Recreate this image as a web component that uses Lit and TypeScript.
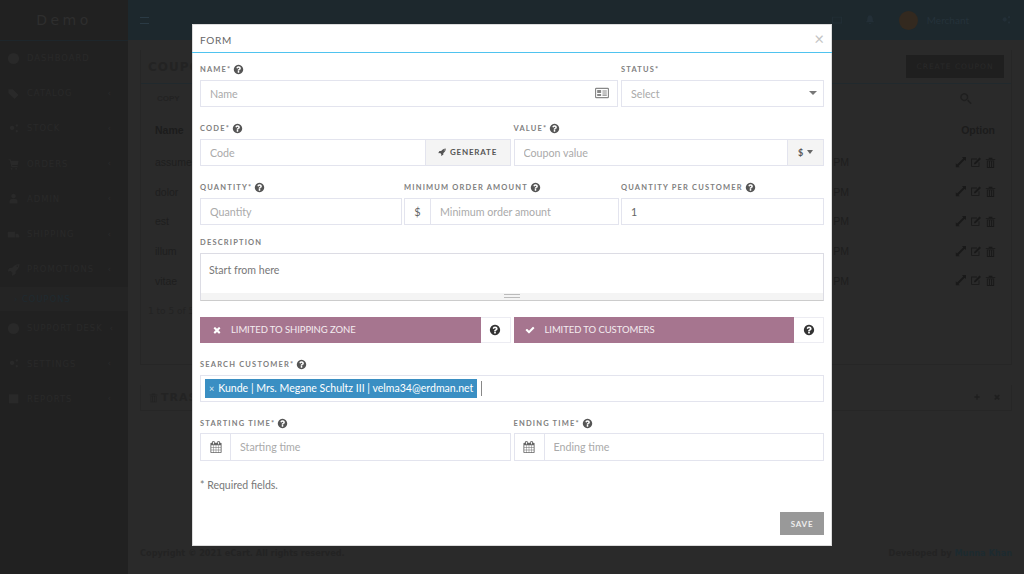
import { LitElement, html, css, svg } from "lit";
import { customElement } from "lit/decorators.js";

const P = {
  q: "M1024 1376v-192q0-14-9-23t-23-9h-192q-14 0-23 9t-9 23v192q0 14 9 23t23 9h192q14 0 23-9t9-23zm256-672q0-88-55.5-163t-138.5-116-170-41q-243 0-371 213-15 24 8 42l132 100q7 6 19 6 16 0 25-12 53-68 86-92 34-24 86-24 48 0 85.5 26t37.5 59q0 38-20 61t-68 45q-63 28-115.5 86.5t-52.5 125.5v36q0 14 9 23t23 9h192q14 0 23-9t9-23q0-19 21.5-49.5t54.5-49.5q32-18 49-28.5t46-35 44.5-48 28-60.5 12.5-81zm384 192q0 209-103 385.5t-279.5 279.5-385.5 103-385.5-103-279.5-279.5-103-385.5 103-385.5 279.5-279.5 385.5-103 385.5 103 279.5 279.5 103 385.5z",
  rocket: "M1504 448q0-40-28-68t-68-28-68 28-28 68 28 68 68 28 68-28 28-68zm224-288q0 249-75.5 430.5t-253.5 360.5q-81 80-195 176l-20 379q-2 16-16 26l-384 224q-7 4-16 4-12 0-23-9l-64-64q-13-14-8-32l85-276-281-281-276 85q-3 1-9 1-14 0-23-9l-64-64q-17-19-5-39l224-384q10-14 26-16l379-20q96-114 176-195 188-187 358-258t431-71q14 0 24 9.5t10 22.5z",
  cal: "M192 1664h288v-288h-288v288zm352 0h320v-288h-320v288zm-352-352h288v-320h-288v320zm352 0h320v-320h-320v320zm-352-384h288v-288h-288v288zm736 736h320v-288h-320v288zm-384-736h320v-288h-320v288zm768 736h288v-288h-288v288zm-384-352h320v-320h-320v320zm-352-864v-288q0-13-9.5-22.5t-22.5-9.5h-64q-13 0-22.5 9.5t-9.5 22.5v288q0 13 9.5 22.5t22.5 9.5h64q13 0 22.5-9.5t9.5-22.5zm736 864h288v-320h-288v320zm-384-384h320v-288h-320v288zm384 0h288v-288h-288v288zm32-480v-288q0-13-9.5-22.5t-22.5-9.5h-64q-13 0-22.5 9.5t-9.5 22.5v288q0 13 9.5 22.5t22.5 9.5h64q13 0 22.5-9.5t9.5-22.5zm384-64v1280q0 52-38 90t-90 38h-1408q-52 0-90-38t-38-90v-1280q0-52 38-90t90-38h128v-96q0-66 47-113t113-47h64q66 0 113 47t47 113v96h384v-96q0-66 47-113t113-47h64q66 0 113 47t47 113v96h128q52 0 90 38t38 90z",
  check: "M1671 566q0 40-28 68l-724 724-136 136q-28 28-68 28t-68-28l-136-136-362-362q-28-28-28-68t28-68l136-136q28-28 68-28t68 28l294 295 656-657q28-28 68-28t68 28l136 136q28 28 28 68z",
  times: "M1490 1322q0 40-28 68l-136 136q-28 28-68 28t-68-28l-294-294-294 294q-28 28-68 28t-68-28l-136-136q-28-28-28-68t28-68l294-294-294-294q-28-28-28-68t28-68l136-136q28-28 68-28t68 28l294 294 294-294q28-28 68-28t68 28l136 136q28 28 28 68t-28 68l-294 294 294 294q28 28 28 68z",
  circle: "M1664 896a768 768 0 1 1-1536 0 768 768 0 1 1 1536 0z",
  tag: "M200 300h600l800 800-560 560-840-800z",
  cart: "M200 300h300l60 200h1050l-130 600h-780l40 150h720v150h-840l-250-950h-170zM640 1500a120 120 0 1 0 1 0zM1260 1500a120 120 0 1 0 1 0z",
  user: "M896 250a320 320 0 1 0 1 0zM350 1600v-350q0-250 250-300h600q250 50 250 300v350z",
  truck: "M100 500h1000v800h-1000zM1180 800h300l220 250v250h-520z",
  gear: "M700 500a320 320 0 1 0 1 0zM1350 300a170 170 0 1 0 1 0zM1350 1100a170 170 0 1 0 1 0z",
  book: "M250 300h1300v1250h-1300z",
  mail: "M150 400h1500v1000h-1500zM280 530v740h1240v-740z",
  bell: "M896 200q300 0 380 350l60 450 180 250h-1240l180-250 60-450q80-350 380-350zM750 1350h290q0 190-145 190t-145-190z",
  expand: "M1650 150v550l-180-180-850 850 180 180H250v-550l180 180 850-850-180-180z",
  edit: "M300 350h800v120h-680v900h900v-500h120v620h-1140zM1450 200l200 200-750 750h-200v-200z",
  trash: "M650 250h500v150h400v120h-1300v-120h400zM400 620h1000v1030h-1000zM520 740v790h160v-790zM820 740v790h160v-790zM1120 740v790h160v-790z",
  search: "M750 250a480 480 0 1 0 1 0zM750 420a310 310 0 1 1-1 0zM1080 1150l130-130 430 430-130 130z",
  plus: "M750 300h300v450h450v300h-450v450h-300v-450h-450v-300h450z",
};
const ic = (d: string, cls = "ic") => html`<svg class=${cls} viewBox="0 0 1792 1792" aria-hidden="true">${svg`<path fill-rule="evenodd" d=${d}></path>`}</svg>`;

const nav = [
  ["DASHBOARD", P.circle, false], ["CATALOG", P.tag, true], ["STOCK", P.gear, true], ["ORDERS", P.cart, true],
  ["ADMIN", P.user, true], ["SHIPPING", P.truck, true], ["PROMOTIONS", P.rocket, true],
];
const nav2 = [["SUPPORT DESK", P.circle], ["SETTINGS", P.gear], ["REPORTS", P.book]];
const rows = [["assumenda", "PM"], ["dolor", "PM"], ["est", "PM"], ["illum", "PM"], ["vitae", "PM"]];

@customElement("app-root")
export class AppRoot extends LitElement {
  static styles = css`
    :host { display: block; width: 1024px; height: 574px; position: relative; overflow: hidden; background: #2a2a2a; font-family: Lato, sans-serif; }
    * { box-sizing: border-box; }
    .ic { width: 1em; height: 1em; fill: currentColor; display: block; flex: none; }
    .page { display: flex; height: 574px; }
    .side { width: 128px; flex: none; background: #212121; color: #292929; font-family: "DejaVu Sans", sans-serif; }
    .logo { height: 40.5px; display: flex; align-items: center; justify-content: center; font-size: 14px; letter-spacing: 3.5px; color: #2e2e2e; border-bottom: 1px solid #1e262b; }
    .nav { display: flex; align-items: center; height: 35.2px; padding: 0 16px 0 7px; font-size: 8.4px; letter-spacing: 1px; gap: 7px; }
    .nav .ic { font-size: 13px; }
    .nav .t { flex: 1; white-space: nowrap; }
    .nav .ch { font-size: 8px; color: #2c2c2c; }
    .active { height: 24px; background: #242424; padding-left: 14px; font-size: 8.4px; letter-spacing: 1px; display: flex; align-items: center; color: #1f2a30; white-space: nowrap; }
    .main { flex: 1; min-width: 0; display: flex; flex-direction: column; }
    .top { height: 40px; background: #1d282d; color: #25323a; display: flex; align-items: center; padding: 0 12px; font-size: 10px; }
    .burger { width: 9px; height: 7px; border-top: 1px solid #2a3a44; border-bottom: 1px solid #2a3a44; }
    .topr { margin-left: auto; display: flex; align-items: center; gap: 9px; }
    .topr .ic { font-size: 12px; color: #232f37; }
    .topr .mail { margin-right: 12px; }
    .topr .bell { margin-right: 14px; }
    .topr .share { margin-left: 22px; }
    .avatar { width: 19px; height: 19px; border-radius: 50%; background: #33291f; }
    .content { flex: 1; padding: 10px 12px 0; color: #1f1f1f; }
    .card { border-left: 1px solid #262626; border-right: 1px solid #262626; border-bottom: 1px solid #262626; }
    .chead { display: flex; align-items: center; justify-content: space-between; height: 34px; padding: 0 7px; border-bottom: 1px solid #21292d; font: bold 12px "DejaVu Sans", sans-serif; letter-spacing: 1px; color: #232323; }
    .create { width: 98px; height: 23px; background: #1f1f1f; color: #292929; font: 7.5px "DejaVu Sans", sans-serif; letter-spacing: 1px; display: flex; align-items: center; justify-content: center; white-space: nowrap; }
    .tools { display: flex; justify-content: space-between; align-items: center; height: 29px; padding: 0 38px 0 16px; font: bold 8px "Liberation Sans", sans-serif; color: #222; }
    .tools .ic { font-size: 15px; color: #1f1f1f; }
    .row { display: flex; height: 29.6px; padding: 0 14px 0 14px; align-items: center; font: 10.5px "Liberation Sans", sans-serif; color: #1e1e1e; }
    .row .nm { flex: 1; }
    .row .tm { margin-right: 105px; }
    .row.h { font-weight: bold; color: #1c1c1c; height: 34.5px; justify-content: space-between; padding-right: 16px; }
    .acts { display: flex; gap: 2px; font-size: 13px; color: #191919; }
    .info { padding: 11px 7px 0; height: 68.5px; font: 9px "DejaVu Sans", sans-serif; color: #232323; }
    .trash { margin-top: 20px; height: 26px; padding: 0 10px 0 7px; display: flex; align-items: center; font: bold 11px "DejaVu Sans", sans-serif; color: #232323; gap: 2px; letter-spacing: 1px; }
    .trash .end { margin-left: auto; display: flex; gap: 12px; }
    .trash .end .ic { font-size: 8px; color: #1f1f1f; }
    .foot { margin-top: auto; height: 34px; padding: 8px 12px 0; display: flex; justify-content: space-between; font: bold 8.2px "DejaVu Sans", sans-serif; color: #232323; white-space: nowrap; }
    .foot b { color: #1d2a30; }
    .modal { position: absolute; left: 192px; top: 24px; width: 640px; height: 522px; background: #fff; display: flex; flex-direction: column; box-shadow: inset 0 0 0 1px #dcdcdc; color: #666; }
    .mh { height: 29px; flex: none; display: flex; align-items: center; justify-content: space-between; padding: 3px 8px 0; border-bottom: 1px solid #4fc3ef; font-size: 10px; letter-spacing: .7px; color: #666; }
    .x { font-size: 17px; color: #c4c4c4; line-height: 1; letter-spacing: 0; margin-top: -3px; }
    .form { flex: 1; display: flex; flex-direction: column; gap: 14px; padding: 9.5px 8px 11px; }
    .g { display: grid; gap: 3px; }
    .g2 { grid-template-columns: 418px 203px; }
    .ge { grid-template-columns: 310.5px 310.5px; }
    .g3 { grid-template-columns: 202px 215px 203px; gap: 2px; }
    .s1 { margin-top: .5px; }
    .tight { margin-top: -3.5px; }
    .wide { margin-top: 2px; }
    .s2 { margin-top: 1px; }
    .lab { height: 12px; margin: 1px 0 4px; display: flex; align-items: center; gap: 2px; font-size: 7.5px; font-weight: 700; letter-spacing: 1.18px; color: #808080; white-space: nowrap; }
    .lab .ic { font-size: 11px; color: #555; }
    .box { height: 27.5px; display: flex; background: #fff; border: 1px solid #e3e4ee; }
    .box input { flex: 1; min-width: 0; border: 0; outline: 0; padding: 0 9px; font: 10.7px Lato, sans-serif; color: #666; background: none; }
    .box input::placeholder { color: #aaa; opacity: 1; }
    .box .tail { flex: none; align-self: center; margin-right: 8px; font-size: 14px; color: #888; }
    .caret { width: 0; height: 0; border: 3px solid transparent; border-top: 4px solid #666; border-bottom: 0; flex: none; }
    .status-c { align-self: center; margin-right: 6px; border-width: 4px 4px 0; border-top-color: #777; }
    .add { flex: none; display: flex; align-items: center; justify-content: center; background: #f4f4f4; border-left: 1px solid #e3e4ee; font-size: 8px; font-weight: 700; letter-spacing: .8px; color: #555; gap: 4px; }
    .gen { width: 85px; }
    .cur { width: 36px; font-size: 9px; gap: 3px; }
    .pre { flex: none; display: flex; align-items: center; justify-content: center; border-right: 1px solid #e3e4ee; color: #666; font-size: 11px; width: 26px; }
    .cal { width: 30px; font-size: 12px; color: #666; }
    .ta { height: 48px; border: 1px solid #dcdce4; border-bottom-color: #ccc; display: flex; flex-direction: column; }
    .ta .body { flex: 1; padding: 10px 8px; font-size: 10.6px; color: #777; }
    .grip { height: 7px; background: #f4f4f4; display: flex; justify-content: center; align-items: center; }
    .grip i { width: 16px; height: 4px; border-top: 1px solid #bbb; border-bottom: 1px solid #bbb; display: block; }
    .tog { height: 26px; display: flex; border: 1px solid #ececf2; }
    .tog .on { flex: 1; background: #a6758f; color: #f4ecf0; display: flex; align-items: center; font-size: 9.5px; letter-spacing: -.08px; margin: -1px 0 -1px -1px; padding-left: 11.5px; gap: 9.5px; white-space: nowrap; }
    .tog .on .ic { font-size: 10px; color: #fff; }
    .tog .help { width: 29px; flex: none; display: flex; align-items: center; justify-content: center; font-size: 12px; color: #333; }
    .multi { align-items: center; padding-left: 4px; height: 27.5px; }
    .chip { height: 19px; background: #3a8fc3; color: #fff; font-size: 10.55px; display: flex; align-items: center; padding: 0 4px; gap: 4px; white-space: nowrap; }
    .chip span { font-size: 9px; color: #d9e9f3; }
    .cursor { width: 1px; height: 15px; background: #888; margin-left: 4px; }
    .note { font-size: 10.5px; color: #777; margin-top: 3px; line-height: 14px; }
    .actions { margin-top: auto; display: flex; justify-content: flex-end; }
    .save { width: 44px; height: 23px; background: #999; border: 0; color: #eee; font: 700 8px Lato, sans-serif; letter-spacing: .8px; padding: 0; }
  `;

  private label(text: string, help = true) {
    return html`<div class="lab"><span>${text}</span>${help ? ic(P.q) : ""}</div>`;
  }

  render() {
    return html`
      <div class="page">
        <aside class="side">
          <div class="logo">Demo</div>
          ${nav.map(([t, d, c]) => html`<div class="nav">${ic(d as string)}<span class="t">${t}</span>${c ? html`<span class="ch">‹</span>` : ""}</div>`)}
          <div class="active">› COUPONS</div>
          ${nav2.map(([t, d]) => html`<div class="nav">${ic(d)}<span class="t">${t}</span><span class="ch">‹</span></div>`)}
        </aside>
        <div class="main">
          <header class="top"><div class="burger"></div><div class="topr">${ic(P.mail, "ic mail")}${ic(P.bell, "ic bell")}<div class="avatar"></div><span>Merchant</span>${ic(P.gear, "ic share")}</div></header>
          <div class="content">
            <section class="card">
              <div class="chead"><span>COUPONS</span><span class="create">CREATE COUPON</span></div>
              <div class="tools"><span>COPY</span>${ic(P.search)}</div>
              <div class="row h"><span>Name</span><span>Option</span></div>
              ${rows.map(([a, b]) => html`<div class="row"><span class="nm">${a}</span><span class="tm">${b}</span><span class="acts">${ic(P.expand)}${ic(P.edit)}${ic(P.trash)}</span></div>`)}
              <div class="info">1 to 5 of 5</div>
            </section>
            <section class="card trash">${ic(P.trash)}TRASH<span class="end">${ic(P.plus)}${ic(P.times)}</span></section>
          </div>
          <footer class="foot"><span>Copyright © 2021 eCart. All rights reserved.</span><span>Developed by <b>Munna Khan</b></span></footer>
        </div>
      </div>

      <div class="modal" role="dialog">
        <div class="mh"><span>FORM</span><span class="x">×</span></div>
        <div class="form">
          <div class="g g2">
            <div>${this.label("NAME*")}<div class="box"><input placeholder="Name" /><svg class="ic tail" viewBox="0 0 16 14">${svg`<path fill-rule="evenodd" d="M1.500 1h13A1.500 1.500 0 0 1 16 2.500v9a1.500 1.500 0 0 1-1.500 1.500h-13A1.500 1.500 0 0 1 0 11.500v-9A1.500 1.500 0 0 1 1.500 1zM1.300 2.300v9.400h13.400V2.300zM2.500 3.500h4.500v3.500H2.500zM2.500 8h4.500v2.500H2.500zM8.500 4h5v1.200h-5zM8.500 6.400h5v1.200h-5zM8.500 8.800h5V10h-5z"></path>`}</svg></div></div>
            <div>${this.label("STATUS*", false)}<div class="box"><input placeholder="Select" /><span class="caret status-c"></span></div></div>
          </div>
          <div class="g ge s1">
            <div>${this.label("CODE*")}<div class="box"><input placeholder="Code" /><div class="add gen">${ic(P.rocket)}GENERATE</div></div></div>
            <div>${this.label("VALUE*")}<div class="box"><input placeholder="Coupon value" /><div class="add cur">$<span class="caret"></span></div></div></div>
          </div>
          <div class="g g3 s1">
            <div>${this.label("QUANTITY*")}<div class="box"><input placeholder="Quantity" /></div></div>
            <div>${this.label("MINIMUM ORDER AMOUNT")}<div class="box"><div class="pre">$</div><input placeholder="Minimum order amount" /></div></div>
            <div>${this.label("QUANTITY PER CUSTOMER")}<div class="box"><input value="1" /></div></div>
          </div>
          <div class="tight">${this.label("DESCRIPTION", false)}<div class="ta"><div class="body">Start from here</div><div class="grip"><i></i></div></div></div>
          <div class="g ge wide">
            <div class="tog"><div class="on">${ic(P.times)}LIMITED TO SHIPPING ZONE</div><div class="help">${ic(P.q)}</div></div>
            <div class="tog"><div class="on">${ic(P.check)}LIMITED TO CUSTOMERS</div><div class="help">${ic(P.q)}</div></div>
          </div>
          <div class="s2">${this.label("SEARCH CUSTOMER*")}<div class="box multi"><div class="chip"><span>×</span>Kunde | Mrs. Megane Schultz III | velma34@erdman.net</div><div class="cursor"></div></div></div>
          <div class="g ge">
            <div>${this.label("STARTING TIME*")}<div class="box"><div class="pre cal">${ic(P.cal)}</div><input placeholder="Starting time" /></div></div>
            <div>${this.label("ENDING TIME*")}<div class="box"><div class="pre cal">${ic(P.cal)}</div><input placeholder="Ending time" /></div></div>
          </div>
          <div class="note">* Required fields.</div>
          <div class="actions"><button class="save">SAVE</button></div>
        </div>
      </div>
    `;
  }
}
